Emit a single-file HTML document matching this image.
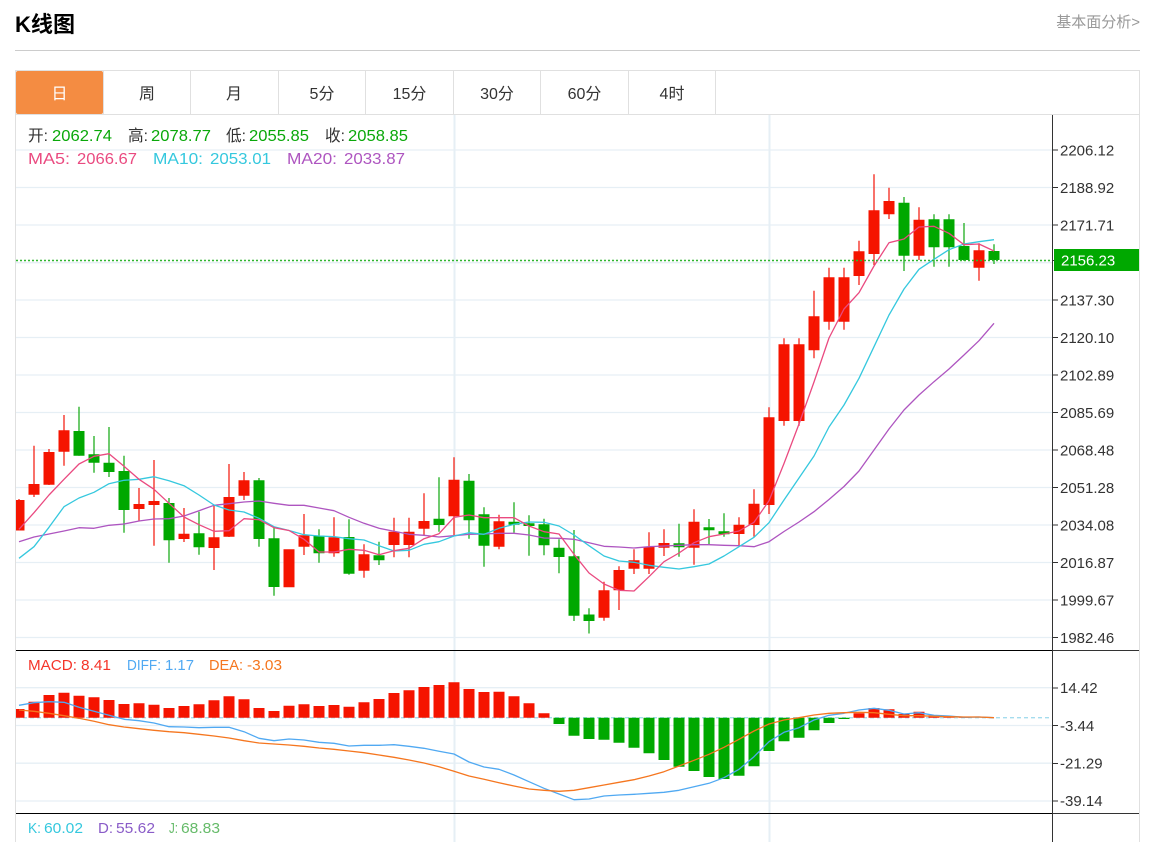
<!DOCTYPE html>
<html lang="zh">
<head>
<meta charset="utf-8">
<title>K线图</title>
<style>
html,body{margin:0;padding:0;background:#fff;width:1152px;height:842px;overflow:hidden}
svg{display:block;position:absolute;left:0;top:0}
text{font-family:"Liberation Sans","Noto Sans CJK SC",sans-serif}
.l{font-size:15px;fill:#333}
.t{font-size:16px;fill:#333;text-anchor:middle}
.v{font-size:16px}
</style>
</head>
<body>
<svg width="1152" height="842" viewBox="0 0 1152 842" xmlns="http://www.w3.org/2000/svg">
<defs><clipPath id="c"><rect x="16" y="115" width="1036" height="727"/></clipPath></defs>

<!-- header -->
<text x="15" y="32" textLength="60" lengthAdjust="spacingAndGlyphs" style="font-size:22px;font-weight:bold;fill:#000">K线图</text>
<text x="1140" y="27" text-anchor="end" style="font-size:15px;fill:#999">基本面分析&gt;</text>
<rect x="15" y="50" width="1125" height="1" fill="#ccc"/>

<!-- frame + tabs -->
<path d="M15.5 842V70.5H1139.5V842" fill="none" stroke="#e0e0e0"/>
<rect x="16" y="114" width="1123" height="1" fill="#e0e0e0"/>
<path d="M103.5 71V114M190.5 71V114M278.5 71V114M365.5 71V114M453.5 71V114M540.5 71V114M628.5 71V114M715.5 71V114" stroke="#e0e0e0" fill="none"/>
<rect x="16" y="71" width="87" height="43" rx="2" fill="#f48c42"/>
<text class="t" x="59.500" y="99" style="fill:#fff">日</text>
<text class="t" x="147" y="99">周</text>
<text class="t" x="234" y="99">月</text>
<text class="t" x="322" y="99">5分</text>
<text class="t" x="409.500" y="99">15分</text>
<text class="t" x="497" y="99">30分</text>
<text class="t" x="584.500" y="99">60分</text>
<text class="t" x="672" y="99">4时</text>

<!-- grid -->
<g clip-path="url(#c)" fill="none" stroke="#e6eff5" stroke-width="1.300">
<path d="M16 150H1052M16 187.500H1052M16 225H1052M16 262.700H1052M16 300H1052M16 337.500H1052M16 375H1052M16 412.500H1052M16 450H1052M16 487.500H1052M16 525H1052M16 562.500H1052M16 600H1052M16 637.500H1052"/>
<path d="M16 687.700H1052M16 725.500H1052M16 763.200H1052M16 801H1052"/>
<path d="M454.500 115V842M769.500 115V842" stroke-width="2"/>
</g>

<g clip-path="url(#c)">
<!-- red candles -->
<path fill="none" stroke="#f3251a" stroke-width="1.300" d="M19 499V530M34 445.700V497M49 449V485M64 415V465.700M139 488V521M154 460V545.700M184 508V542M214 504.700V570M229 464V537M244 472V500M304 514V555M334 517.300V556.700M364 544.300V577.700M394 517.700V557.300M409 517.700V557.300M424 493.300V535M454 457.300V535M499 514.700V549.300M604 581.700V620.700M619 566.300V610M634 549.300V574M649 532.300V574M664 529.300V556M694 509.300V564.700M739 517.300V546M754 489.300V536.700M769 407.300V514M784 338.300V425.700M799 338.300V425.700M814 290.700V358.300M829 267.700V329.700M844 267.700V329.700M859 240.700V285M874 174.300V265M889 187.700V219M919 207.300V260M979 243.300V280.700"/>
<path fill="#f51400" d="M13.500 500h11V530.500h-11zM28.500 484h11V494.700h-11zM43.500 452h11V484.700h-11zM58.500 430.300h11V451.700h-11zM133.500 504h11V509h-11zM148.500 501h11V505h-11zM178.500 533.700h11V539h-11zM208.500 537.300h11V548h-11zM223.500 497h11V536.700h-11zM238.500 480.300h11V495.700h-11zM283.500 549.300h11V587.300h-11zM298.500 535.300h11V546.700h-11zM328.500 537.300h11V553.300h-11zM358.500 554.300h11V570.700h-11zM388.500 531.700h11V545h-11zM403.500 531.700h11V545h-11zM418.500 521h11V528.700h-11zM448.500 479.700h11V516.300h-11zM493.500 521.300h11V546.700h-11zM598.500 590.300h11V617.700h-11zM613.500 570h11V590.300h-11zM628.500 560.300h11V568.700h-11zM643.500 547h11V568.700h-11zM658.500 543h11V547.700h-11zM688.500 521.700h11V547.700h-11zM733.500 524.700h11V534h-11zM748.500 503.700h11V525h-11zM763.500 417.300h11V505h-11zM778.500 344.300h11V421h-11zM793.500 344.300h11V421h-11zM808.500 316.300h11V350.300h-11zM823.500 277.300h11V321.700h-11zM838.500 277.300h11V321.700h-11zM853.500 251.300h11V276h-11zM868.500 210.300h11V254h-11zM883.500 201h11V214.300h-11zM913.500 219.700h11V255.700h-11zM973.500 250.300h11V267.700h-11z"/>
<!-- green candles -->
<path fill="none" stroke="#1fae1f" stroke-width="1.300" d="M79 406.700V455.700M94 436V472.700M109 427V477M124 455.700V532.700M169 498V562.700M199 511.700V554.700M259 478V546.700M274 527V595.700M319 529.300V562.700M349 519.300V574.700M379 541.700V565M439 477.300V531.700M469 474V538.700M484 507.300V566.700M514 502.300V532.700M529 515.300V555.700M544 518.700V555.300M559 539.300V573.300M574 530V621M589 608.300V633.500M679 523.700V556.700M709 519V545M724 513.300V536.700M904 197V271M934 214.300V266.700M949 214.300V266.700M964 223V261M994 244.300V264"/>
<path fill="#00a800" d="M73.500 431h11V455.700h-11zM88.500 454.300h11V462.700h-11zM103.500 462.700h11V472h-11zM118.500 471h11V510h-11zM163.500 503h11V540.300h-11zM193.500 533.300h11V547.300h-11zM253.500 480.300h11V539h-11zM268.500 538.300h11V587h-11zM313.500 535.700h11V553.300h-11zM343.500 537h11V573.700h-11zM373.500 555.300h11V560.300h-11zM433.500 518.700h11V525h-11zM463.500 480.700h11V520.300h-11zM478.500 514.300h11V545.700h-11zM508.500 521.700h11V524.700h-11zM523.500 523.300h11V526h-11zM538.500 524.300h11V545.300h-11zM553.500 547.700h11V557h-11zM568.500 556.300h11V615.700h-11zM583.500 614.500h11V621h-11zM673.500 543.300h11V547.300h-11zM703.500 527.300h11V530.300h-11zM718.500 531.300h11V534.300h-11zM898.500 202.700h11V255.700h-11zM928.500 219.300h11V247.300h-11zM943.500 219.300h11V247.300h-11zM958.500 246h11V260h-11zM988.500 251h11V260h-11z"/>

<!-- moving averages -->
<g fill="none" stroke-width="1.300" stroke-linejoin="round">
<polyline stroke="#ae55c0" points="19,541.7 34,537 49,534 64,531 79,527.700 94,528.300 109,525.300 124,524 139,521 154,519 169,518.700 184,516 199,510.700 214,505.300 229,503.700 244,502 259,501 274,503.300 289,505.300 304,505.300 319,508 334,510.700 349,517.300 364,523.300 379,528.300 394,531.300 409,534.300 424,535.300 439,537 454,535.700 469,534.300 484,534 499,533.300 514,533.300 529,535 544,538 559,538.300 574,539.300 589,542.700 604,546.300 619,547 634,548 649,546.700 664,546 679,545.300 694,544.700 709,544.700 724,545.300 739,545.700 754,546.700 769,541.700 784,531.500 799,522 814,511.700 829,499.500 844,486.500 859,471 874,450 889,429 904,410 919,395 934,381.700 949,369 964,355 979,340.700 994,323.300"/>
<polyline stroke="#35c8de" points="19,558.3 34,546.700 49,527.300 64,506.700 79,498 94,492.300 109,483.700 124,480.300 139,479.300 154,476.700 169,480.700 184,485.700 199,495 214,505 229,510 244,512 259,518.300 274,526.700 289,530.500 304,534.700 319,536 334,536.700 349,538.700 364,540 379,545.700 394,551 409,550.300 424,544.300 439,541.700 454,536 469,532.700 484,534.300 499,528.300 514,524.300 529,522 544,522.300 559,526 574,535 589,545.700 604,556 619,561 634,562.300 649,565.300 664,567.300 679,569 694,566.700 709,564 724,556 739,546.700 754,537.300 769,522.700 784,500 799,478 814,456 829,427 844,405 859,378.300 874,346.700 889,315 904,289 919,269.300 934,259.300 949,249.700 964,244 979,241.700 994,239.700"/>
<polyline stroke="#ea4a80" points="19,529.3 34,512.700 49,495 64,479.300 79,464 94,456.300 109,453.700 124,466.300 139,479.300 154,489.300 169,503.300 184,517 199,524.700 214,531.300 229,530.700 244,518.700 259,519.700 274,527.700 289,530.500 304,539.300 319,552 334,552 349,549.300 364,550.300 379,554.700 394,550.700 409,548.300 424,538.700 439,533.700 454,517.300 469,515 484,517.700 499,517.700 514,517.700 529,526 544,531.700 559,534 574,554.300 589,573 604,584 619,590.300 634,591 649,576.700 664,561.700 679,553 694,542.700 709,536.700 724,534 739,531 754,522.300 769,500.700 784,463.500 799,424 814,382 829,338 844,309 859,292.700 874,266 889,242.700 904,239 919,227 934,226.300 949,233.300 964,244.700 979,244 994,251"/>
</g>

<!-- current price dotted -->
<path d="M16 260.500H1052" stroke="#2fb52f" stroke-width="1.500" stroke-dasharray="2 2" fill="none"/>

<!-- MACD -->
<path d="M16 717.700H1052" stroke="#a5dcee" stroke-width="1.400" stroke-dasharray="4 3" fill="none"/>
<path fill="#f51400" d="M13.500 709h11v8.700h-11zM28.500 701.700h11v16h-11zM43.500 695h11v22.700h-11zM58.500 692.700h11v25h-11zM73.500 695.700h11v22h-11zM88.500 697.300h11v20.400h-11zM103.500 700h11v17.700h-11zM118.500 704h11v13.700h-11zM133.500 703.300h11v14.400h-11zM148.500 704.700h11v13h-11zM163.500 708h11v9.700h-11zM178.500 706h11v11.700h-11zM193.500 704.300h11v13.400h-11zM208.500 700.300h11v17.400h-11zM223.500 696.300h11v21.400h-11zM238.500 699.300h11v18.400h-11zM253.500 708h11v9.700h-11zM268.500 711h11v6.700h-11zM283.500 705.700h11v12h-11zM298.500 704.300h11v13.400h-11zM313.500 706h11v11.700h-11zM328.500 705h11v12.700h-11zM343.500 706.700h11v11h-11zM358.500 702.300h11v15.400h-11zM373.500 699h11v18.700h-11zM388.500 693h11v24.700h-11zM403.500 690.300h11v27.400h-11zM418.500 687h11v30.700h-11zM433.500 685h11v32.700h-11zM448.500 682.300h11v35.400h-11zM463.500 689h11v28.700h-11zM478.500 692h11v25.700h-11zM493.500 691.700h11v26h-11zM508.500 696.300h11v21.400h-11zM523.500 703.300h11v14.400h-11zM538.500 713.300h11v4.400h-11zM853.500 713.300h11v4.400h-11zM868.500 708h11v9.700h-11zM883.500 709.300h11v8.400h-11zM898.500 714h11v3.700h-11zM913.500 711.700h11v6h-11zM928.500 715.300h11v2.400h-11zM943.500 716h11v1.700h-11zM958.500 716.700h11v1h-11z"/>
<path fill="#00a800" d="M553.500 717.700h11V724h-11zM568.500 717.700h11V735.700h-11zM583.500 717.700h11V739h-11zM598.500 717.700h11V739.700h-11zM613.500 717.700h11V742.700h-11zM628.500 717.700h11V747.700h-11zM643.500 717.700h11V753.300h-11zM658.500 717.700h11V760h-11zM673.500 717.700h11V766.700h-11zM688.500 717.700h11V771h-11zM703.500 717.700h11V777h-11zM718.500 717.700h11V779h-11zM733.500 717.700h11V775.700h-11zM748.500 717.700h11V766.300h-11zM763.500 717.700h11V751h-11zM778.500 717.700h11V741.300h-11zM793.500 717.700h11V737.700h-11zM808.500 717.700h11V730.300h-11zM823.500 717.700h11V723h-11zM838.500 717.700h11V719h-11z"/>
<g fill="none" stroke-width="1.300" stroke-linejoin="round">
<polyline stroke="#50a9f2" points="19,705.3 34,702.700 49,701.700 64,702.300 79,707.300 94,711.300 109,715.300 124,719.300 139,720.700 154,723 169,726.700 184,727 199,727.700 214,727.300 229,727.300 244,731.700 259,738.300 274,740.700 289,739 304,740 319,742.300 334,743.300 349,746 364,745.300 379,745.300 394,744.700 409,746.300 424,748.300 439,751.300 454,754 469,762 484,767 499,769.300 514,775 529,781.700 544,788.300 559,794 574,799.700 589,799 604,796 619,795 634,794.300 649,793.300 664,792.300 679,790.300 694,786.700 709,783.300 724,777.700 739,769.300 754,756.700 769,741.700 784,732.300 799,727.700 814,720 829,715.300 844,713.300 859,710 874,708.300 889,710.300 904,714 919,712.700 934,715.300 949,716 964,717.300 979,717 994,717.700"/>
<polyline stroke="#f5761f" points="19,710 34,711.300 49,713.300 64,715.700 79,718.300 94,721.300 109,724.700 124,727 139,728.700 154,730.300 169,731.700 184,732.700 199,734.300 214,736 229,738 244,740.700 259,743 274,744 289,745 304,746.300 319,748 334,749.300 349,751 364,752.700 379,755 394,757.300 409,760 424,763 439,766.700 454,771.300 469,776 484,779.300 499,782.700 514,786 529,789 544,790.300 559,791.300 574,790.300 589,787.700 604,785 619,782.300 634,779.700 649,776 664,771.700 679,766 694,760.300 709,754.300 724,747.300 739,739.300 754,731 769,724 784,720 799,717.700 814,715 829,713.300 844,712.700 859,712.300 874,712.700 889,714.300 904,715.700 919,715.700 934,716.300 949,716.700 964,717 979,717 994,717.700"/>
</g>
</g>

<!-- axis and panel separators -->
<rect x="16" y="650" width="1036" height="1" fill="#000"/>
<rect x="16" y="813" width="1036" height="1" fill="#000"/>
<rect x="1052" y="650" width="87" height="1" fill="#333"/>
<rect x="1052" y="813" width="87" height="1" fill="#333"/>
<rect x="1052" y="115" width="1" height="727" fill="#333"/>
<path fill="none" stroke="#333" d="M1053 150H1058M1053 187.500H1058M1053 225H1058M1053 260.500H1058M1053 300H1058M1053 337.500H1058M1053 375H1058M1053 412.500H1058M1053 450H1058M1053 487.500H1058M1053 525H1058M1053 562.500H1058M1053 600H1058M1053 637.500H1058M1053 688H1058M1053 725.500H1058M1053 763.500H1058M1053 801H1058"/>

<!-- axis labels -->
<text class="l" x="1060" y="155.500">2206.12</text>
<text class="l" x="1060" y="193">2188.92</text>
<text class="l" x="1060" y="230.500">2171.71</text>
<text class="l" x="1060" y="305.500">2137.30</text>
<text class="l" x="1060" y="343">2120.10</text>
<text class="l" x="1060" y="380.500">2102.89</text>
<text class="l" x="1060" y="418">2085.69</text>
<text class="l" x="1060" y="455.500">2068.48</text>
<text class="l" x="1060" y="493">2051.28</text>
<text class="l" x="1060" y="530.500">2034.08</text>
<text class="l" x="1060" y="568">2016.87</text>
<text class="l" x="1060" y="605.500">1999.67</text>
<text class="l" x="1060" y="643">1982.46</text>
<text class="l" x="1060" y="693">14.42</text>
<text class="l" x="1060" y="731">-3.44</text>
<text class="l" x="1060" y="768.500">-21.29</text>
<text class="l" x="1060" y="806">-39.14</text>
<rect x="1054" y="249" width="85" height="22" fill="#00a800"/>
<text x="1061" y="265.500" style="font-size:15px;fill:#fff">2156.23</text>

<!-- OHLC legend -->
<text class="v" x="28" y="141" fill="#333" textLength="20" lengthAdjust="spacingAndGlyphs">开:</text><text class="v" x="52" y="141" fill="#0aa80a" textLength="60" lengthAdjust="spacingAndGlyphs">2062.74</text>
<text class="v" x="128" y="141" fill="#333" textLength="20" lengthAdjust="spacingAndGlyphs">高:</text><text class="v" x="151" y="141" fill="#0aa80a" textLength="60" lengthAdjust="spacingAndGlyphs">2078.77</text>
<text class="v" x="226" y="141" fill="#333" textLength="20" lengthAdjust="spacingAndGlyphs">低:</text><text class="v" x="249" y="141" fill="#0aa80a" textLength="60" lengthAdjust="spacingAndGlyphs">2055.85</text>
<text class="v" x="325" y="141" fill="#333" textLength="20" lengthAdjust="spacingAndGlyphs">收:</text><text class="v" x="348" y="141" fill="#0aa80a" textLength="60" lengthAdjust="spacingAndGlyphs">2058.85</text>
<text class="v" x="28" y="164" fill="#ea4a80" textLength="42" lengthAdjust="spacingAndGlyphs">MA5:</text><text class="v" x="77" y="164" fill="#ea4a80" textLength="60" lengthAdjust="spacingAndGlyphs">2066.67</text>
<text class="v" x="153" y="164" fill="#35c8de" textLength="50" lengthAdjust="spacingAndGlyphs">MA10:</text><text class="v" x="210" y="164" fill="#35c8de" textLength="61" lengthAdjust="spacingAndGlyphs">2053.01</text>
<text class="v" x="287" y="164" fill="#ae55c0" textLength="50" lengthAdjust="spacingAndGlyphs">MA20:</text><text class="v" x="344" y="164" fill="#ae55c0" textLength="61" lengthAdjust="spacingAndGlyphs">2033.87</text>

<!-- MACD legend -->
<text x="28" y="670" style="font-size:15px;fill:#f5352a" textLength="49" lengthAdjust="spacingAndGlyphs">MACD:</text><text x="81" y="670" style="font-size:15px;fill:#f5352a" textLength="30" lengthAdjust="spacingAndGlyphs">8.41</text>
<text x="127" y="670" style="font-size:15px;fill:#50a9f2" textLength="34" lengthAdjust="spacingAndGlyphs">DIFF:</text><text x="165" y="670" style="font-size:15px;fill:#50a9f2" textLength="29" lengthAdjust="spacingAndGlyphs">1.17</text>
<text x="209" y="670" style="font-size:15px;fill:#f5761f" textLength="34" lengthAdjust="spacingAndGlyphs">DEA:</text><text x="247" y="670" style="font-size:15px;fill:#f5761f" textLength="35" lengthAdjust="spacingAndGlyphs">-3.03</text>

<!-- KDJ legend -->
<text x="28" y="833" style="font-size:15px;fill:#35c8de" textLength="13" lengthAdjust="spacingAndGlyphs">K:</text><text x="44" y="833" style="font-size:15px;fill:#35c8de" textLength="39" lengthAdjust="spacingAndGlyphs">60.02</text>
<text x="98" y="833" style="font-size:15px;fill:#8a5cc8" textLength="15" lengthAdjust="spacingAndGlyphs">D:</text><text x="116" y="833" style="font-size:15px;fill:#8a5cc8" textLength="39" lengthAdjust="spacingAndGlyphs">55.62</text>
<text x="169" y="833" style="font-size:15px;fill:#66bb6a" textLength="9" lengthAdjust="spacingAndGlyphs">J:</text><text x="181" y="833" style="font-size:15px;fill:#66bb6a" textLength="39" lengthAdjust="spacingAndGlyphs">68.83</text>
</svg>
</body>
</html>
